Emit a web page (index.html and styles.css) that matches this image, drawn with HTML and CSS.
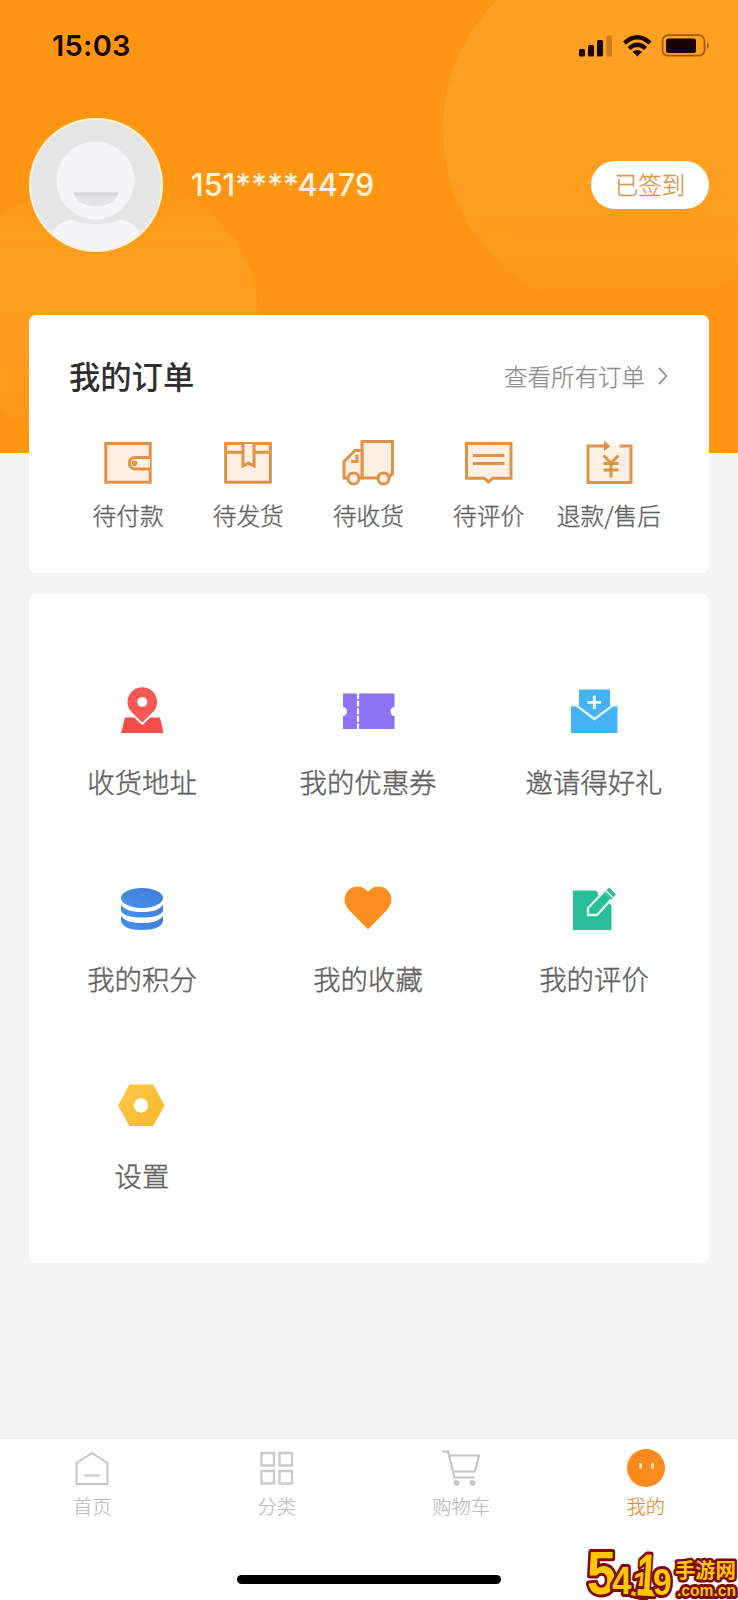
FILE: index.html
```html
<!DOCTYPE html>
<html lang="zh-CN">
<head>
<meta charset="utf-8">
<title>我的</title>
<link rel="stylesheet" href="styles.css">
</head>
<body>
<div class="app">
  <header class="hero">
    <svg class="bubbles" viewBox="0 0 738 453">
      <defs>
        <linearGradient id="b1" x1="0" y1="0" x2="0" y2="1"><stop offset="0" stop-color="#ffa024"/><stop offset=".65" stop-color="#ff9f22"/><stop offset="1" stop-color="#ff9613"/></linearGradient>
        <linearGradient id="b2" x1="0" y1="0" x2="0" y2="1"><stop offset="0" stop-color="#ff9613"/><stop offset=".3" stop-color="#ff9e20"/><stop offset=".6" stop-color="#ff9c1e"/><stop offset="1" stop-color="#ff9613"/></linearGradient>
      </defs>
      <circle cx="626" cy="130" r="183" fill="url(#b1)"/>
      <ellipse cx="108" cy="314" rx="150" ry="138" fill="url(#b2)"/>
    </svg>
    <div class="status">
      <span class="time">15:03</span>
      <svg class="status-icons" width="134" height="26" viewBox="0 0 134 26">
        <g fill="#180500">
          <rect x="1" y="16" width="6" height="7.500" rx="1.500"/><rect x="10" y="12" width="6" height="11.500" rx="1.500"/><rect x="19" y="7" width="6" height="16.500" rx="1.500"/>
          <rect x="28.500" y="2.500" width="5.500" height="21" rx="1.500" opacity=".22"/>
          <path d="M59.300 23.500l-4.800-4.700q4.800-3.600 9.600 0z"/>
          <rect x="88" y="5.500" width="30" height="14.500" rx="2.500"/>
        </g>
        <g fill="none" stroke="#180500" stroke-width="4.200"><path d="M46.500 10q12.800-11.500 25.600 0"/><path d="M51 15.500q8.300-7.500 16.600 0"/></g>
        <rect x="84.500" y="2.200" width="42" height="20.500" rx="5.500" fill="none" stroke="#a35c08" stroke-width="1.700"/>
        <path d="M129 9q3.600 3.500 0 7z" fill="#a35c08"/>
      </svg>
    </div>
    <div class="profile">
      <svg class="avatar" width="134" height="134" viewBox="0 0 134 134">
        <defs><clipPath id="face"><circle cx="67" cy="67" r="65"/></clipPath></defs>
        <circle cx="67" cy="67" r="67" fill="#fff3d4"/>
        <circle cx="67" cy="67" r="65" fill="#e5e5e6"/>
        <g clip-path="url(#face)">
          <path d="M18 122q12-20 24-20 25 8 50 0 12 0 24 20v14H18z" fill="#f5f4f6"/>
          <circle cx="66.500" cy="62.500" r="39" fill="#f5f4f6"/>
          <path d="M44.500 74.500h45q-5 14-22.500 14t-22.500-14z" fill="#e3e2e4"/>
          <path d="M44.500 74.500h45l-1.500 3.500h-42z" fill="#d9d9da"/>
        </g>
      </svg>
      <span class="phone">151****4479</span>
      <span class="signed">已签到</span>
    </div>
  </header>

  <main class="content">
    <section class="card orders">
      <div class="orders-head">
        <h2>我的订单</h2>
        <a class="all">查看所有订单<svg width="12" height="20" viewBox="0 0 12 20"><path d="M2 2l7.500 8L2 18" fill="none" stroke="#999" stroke-width="1.900"/></svg></a>
      </div>
      <div class="order-row">
        <div class="order">
          <svg class="line-icon" viewBox="0 0 60 50"><rect x="7.800" y="5.500" width="44.400" height="38.700"/><path d="M52 19.500H37a5.700 5.700 0 0 0 0 11.400h15"/><circle class="dot" cx="36.500" cy="25.200" r="2.800"/></svg>
          <span>待付款</span>
        </div>
        <div class="order">
          <svg class="line-icon" viewBox="0 0 60 50"><rect x="7.600" y="5.500" width="44.800" height="38.700"/><path d="M8 14.300h16.500M36 14.300h16.500M25 6v22l5.500-2.800 5.500 2.800V6"/></svg>
          <span>待发货</span>
        </div>
        <div class="order">
          <svg class="line-icon" viewBox="0 0 60 50"><path d="M24 39V3.500h30.500V36l-5 4H24z"/><path d="M24 12.500h-7L6 23.500V40h18z"/><path class="bare" d="M19 16.500v7h-6"/><circle cx="15.500" cy="40.500" r="5.500"/><circle cx="45.500" cy="40.500" r="5.500"/></svg>
          <span>待收货</span>
        </div>
        <div class="order">
          <svg class="line-icon" viewBox="0 0 60 50"><path d="M7.500 5.500H52v34.800H33.500L29.500 44l-4-3.700h-18z"/><path d="M14 17.500h31.500M14 25.500h31.500"/></svg>
          <span>待评价</span>
        </div>
        <div class="order">
          <svg class="line-icon" viewBox="0 0 60 50"><path class="fill" d="M9 8h43v37H9z"/><path class="bare" d="M28 8H9v36.500h43V8H40.500"/><path class="dot" d="M25 3v10l6.500-5z"/><path class="bare" d="M24.500 17.500l7.500 7.500 7.500-7.500M32 25v14.500M24.500 25.500h15M24.500 32h15"/></svg>
          <span>退款/售后</span>
        </div>
      </div>
    </section>

    <section class="card services">
      <div class="service">
        <svg viewBox="0 0 60 60"><path d="M13 37.500h35l3.500 15.500H9z" fill="#f44d49"/><path d="M30.300 42.500L19 31.500a14.800 14.800 0 1 1 22.600 0z" fill="#f65953" stroke="#fff" stroke-width="4"/><path d="M30.300 42.500L19 31.500a14.800 14.800 0 1 1 22.600 0z" fill="#f65953"/><circle cx="30.300" cy="22" r="5" fill="#fff"/></svg>
        <span>收货地址</span>
      </div>
      <div class="service">
        <svg viewBox="0 0 60 60"><path d="M5 13.500h51.500v13.500a4 4.500 0 0 0 0 9V49H5V36a4 4.500 0 0 0 0-9z" fill="#8d73f4"/><path d="M20 13v36" stroke="#fff" stroke-width="2.200" stroke-dasharray="6 1.600"/></svg>
        <span>我的优惠券</span>
      </div>
      <div class="service">
        <svg viewBox="0 0 60 60"><path d="M7 25.500h46.500V53H7z" fill="#44b3f6"/><path d="M15 9.500h31v19L30.500 39 15 28.500z" fill="#44b3f6"/><path d="M7 25.500h5.500L30.500 39l18-13.500h5" fill="none" stroke="#e4f8ff" stroke-width="2.200"/><path d="M30.300 15.500v13.500M23.500 22.300H37" stroke="#f4fcff" stroke-width="2.800"/></svg>
        <span>邀请得好礼</span>
      </div>
      <div class="service">
        <svg viewBox="0 0 60 60"><defs><linearGradient id="disc" x1="0" y1="1" x2="1" y2="0"><stop stop-color="#4593ef"/><stop offset="1" stop-color="#3d7bd4"/></linearGradient></defs><g fill="url(#disc)"><ellipse cx="30" cy="21" rx="21" ry="10"/><path d="M9 27.500q4 7.500 21 7.500t21-7.500v6q-2 7-21 7t-21-7z"/><path d="M9 38.500Q13 46 30 46t21-7.500V44q-2 9-21 9T9 44z"/></g></svg>
        <span>我的积分</span>
      </div>
      <div class="service">
        <svg viewBox="0 0 60 60"><path d="M30 52.500L11 33C1 21 10 9.500 19 9.500q7 0 11 5.500 4-5.500 11-5.500c9 0 18 11.500 8 23.500z" fill="#fc8e20"/></svg>
        <span>我的收藏</span>
      </div>
      <div class="service">
        <svg viewBox="0 0 60 60"><path d="M9 13.500h21q3 0 4 2l13.500 12V53H9z" fill="#2abd99"/><path d="M42 11l9 9v8h-4L33 17z" fill="#fff"/><path d="M24 31L40.500 14l7.500 7.500L33 38h-9z" fill="#2abd99" stroke="#e0fbf4" stroke-width="2.300"/><path d="M40.500 15.500L45 10.500l7 7-4.500 5z" fill="#2abd99"/><path d="M40.500 12.500l9.500 9" stroke="#e0fbf4" stroke-width="1.500"/></svg>
        <span>我的评价</span>
      </div>
      <div class="service">
        <svg viewBox="0 0 60 60"><defs><linearGradient id="nut" x1="0" y1="0" x2="1" y2="1"><stop stop-color="#fcc94a"/><stop offset="1" stop-color="#f9b72a"/></linearGradient></defs><path d="M17.500 11h23.500l11 20.500-11 20H17.500l-11-20z" fill="url(#nut)" stroke="url(#nut)" stroke-linejoin="round"/><circle cx="29" cy="31.500" r="7.200" fill="#fff"/></svg>
        <span>设置</span>
      </div>
    </section>
  </main>

  <nav class="tabs">
    <div class="tab">
      <svg viewBox="0 0 44 44"><g fill="none" stroke="#c6c6c6" stroke-width="2"><path d="M6.500 18L22 8l15.500 10v21h-31z"/><path d="M14.500 30.500h15"/></g></svg>
      <span>首页</span>
    </div>
    <div class="tab">
      <svg viewBox="0 0 44 44"><g fill="none" stroke="#cacaca" stroke-width="2.400"><path d="M6.500 8H19v12.500H6.500zM24.500 8H37v12.500H24.500zM6.500 26H19v12.500H6.500zM24.500 26H37v12.500H24.500z"/></g></svg>
      <span>分类</span>
    </div>
    <div class="tab">
      <svg viewBox="0 0 44 44"><g fill="none" stroke="#c6c6c6" stroke-width="2.200"><path d="M3 6.500h6l6.500 26h20"/><path d="M10 10.500h30l-4 16H14"/></g><circle cx="17.500" cy="38" r="2.800" fill="#c6c6c6"/><circle cx="33.500" cy="38" r="2.800" fill="#c6c6c6"/></svg>
      <span>购物车</span>
    </div>
    <div class="tab active">
      <svg viewBox="0 0 44 44"><circle cx="22" cy="23" r="19" fill="#f98a1b"/><path d="M16.500 18v5.500M28.500 18v5.500" stroke="#ffe5ba" stroke-width="2.600"/></svg>
      <span>我的</span>
    </div>
  </nav>
  <div class="home-bar"></div>
  <svg class="mark" width="152" height="54" viewBox="0 0 152 54">
    <g class="mark-text">
      <text transform="translate(1 47.500) scale(.86 1)" font-size="61">5</text>
      <text transform="translate(26 48) scale(.9 1)" font-size="39">4</text>
      <text transform="translate(43 48.500) rotate(12) scale(.9 1)" font-size="36">1</text>
      <text transform="translate(49 49) rotate(4) scale(.62 1)" font-size="60">1</text>
      <text transform="translate(67 49) scale(.9 1)" font-size="37">9</text>
      <text class="cjk" x="89" y="32" font-size="20.500" textLength="61">手游网</text>
      <text x="91" y="49.500" font-size="17" textLength="59" lengthAdjust="spacingAndGlyphs">.com.cn</text>
    </g>
  </svg>
</div>
</body>
</html>
```
FILE: styles.css
```css
* { box-sizing: border-box; }
body {
  margin: 0;
  background: #f5f4f5;
  font-family: "Noto Sans CJK SC", sans-serif;
}
.app {
  position: relative;
  width: 738px;
  height: 1600px;
  overflow: hidden;
  display: flex;
  flex-direction: column;
}
.hero {
  position: relative;
  height: 453px;
  flex: none;
  background: #ff9613;
}
.bubbles { position: absolute; inset: 0; width: 738px; height: 453px; }
.status {
  position: relative;
  height: 118px;
  padding: 28px 26px 0 52px;
  display: flex;
  justify-content: space-between;
  align-items: flex-start;
}
.time {
  font: 600 29px/36px Inter, sans-serif;
  color: #180500;
  letter-spacing: .3px;
}
.status-icons { margin-top: 5px; }
.profile {
  position: relative;
  height: 134px;
  padding: 0 29px;
  display: flex;
  align-items: center;
}
.phone {
  margin-left: 28px;
  font: 500 30.600px/36px Inter, sans-serif;
  color: #fff5dc;
  white-space: nowrap;
}
.signed {
  margin-left: auto;
  width: 118px;
  height: 48px;
  border-radius: 24px;
  background: #fff;
  color: #d8964a;
  font-size: 23.500px;
  line-height: 46px;
  font-weight: 300;
  -webkit-text-stroke: .3px;
  text-align: center;
}
.content {
  position: relative;
  margin-top: -138px;
  padding: 0 29px;
  height: 1124px;
  flex: none;
}
.card { background: #fff; border-radius: 7px; }
.orders { height: 258px; padding: 39px 40px 0; }
.orders-head {
  display: flex;
  justify-content: space-between;
  align-items: center;
  height: 44px;
}
h2 { margin: 0; font-size: 31.300px; font-weight: 500; line-height: 44px; color: #2f2f2f; }
.all {
  display: flex;
  align-items: center;
  gap: 12px;
  font-size: 23.500px;
  line-height: 44px;
  font-weight: 300;
  -webkit-text-stroke: .25px;
  color: #8c8c8c;
}
.order-row { display: grid; grid-template-columns: repeat(5, 120.200px); margin: 40px 0 0 -1px; }
.order { display: flex; flex-direction: column; align-items: center; }
.line-icon { width: 60px; height: 50px; }
.line-icon * { fill: #fff0e3; stroke: #df9348; stroke-width: 3; }
.line-icon .dot { fill: #df9348; stroke: none; }
.line-icon .fill { stroke: none; }
.line-icon .bare { fill: none; }
.order span {
  margin-top: 10px;
  font-size: 23.700px;
  line-height: 34px;
  color: #606060;
  font-weight: 300;
  -webkit-text-stroke: .35px;
  white-space: nowrap;
}
.services {
  margin-top: 21px;
  height: 669px;
  padding-top: 86px;
  display: grid;
  grid-template-columns: repeat(3, 226px);
  grid-auto-rows: 122px;
  row-gap: 75px;
}
.service { display: flex; flex-direction: column; align-items: center; }
.service svg { width: 60px; height: 60px; }
.service span {
  margin-top: 21px;
  font-size: 27.400px;
  line-height: 40px;
  color: #606060;
  font-weight: 300;
  -webkit-text-stroke: .4px;
}
.tabs {
  height: 161px;
  flex: none;
  background: #fff;
  display: grid;
  grid-template-columns: repeat(4, 1fr);
  padding-top: 6px;
}
.tab { display: flex; flex-direction: column; align-items: center; }
.tab svg { width: 44px; height: 44px; }
.tab span {
  margin-top: 2px;
  font-size: 19.300px;
  line-height: 30px;
  color: #bcbcbc;
  font-weight: 300;
  -webkit-text-stroke: .2px;
}
.tab.active span { color: #e38b33; }
.home-bar {
  position: absolute;
  left: 237px;
  top: 1575px;
  width: 264px;
  height: 9px;
  border-radius: 5px;
  background: #000;
}
.mark { position: absolute; left: 586px; top: 1546px; overflow: visible; }
.mark-text {
  font-family: "Liberation Sans", sans-serif;
  font-weight: 700;
  fill: #ffc800;
  stroke: #7d0b08;
  stroke-width: 6px;
  stroke-linejoin: round;
  paint-order: stroke;
}
.mark-text .cjk { font-family: "Noto Sans CJK SC", sans-serif; stroke-width: 5px; }
```
